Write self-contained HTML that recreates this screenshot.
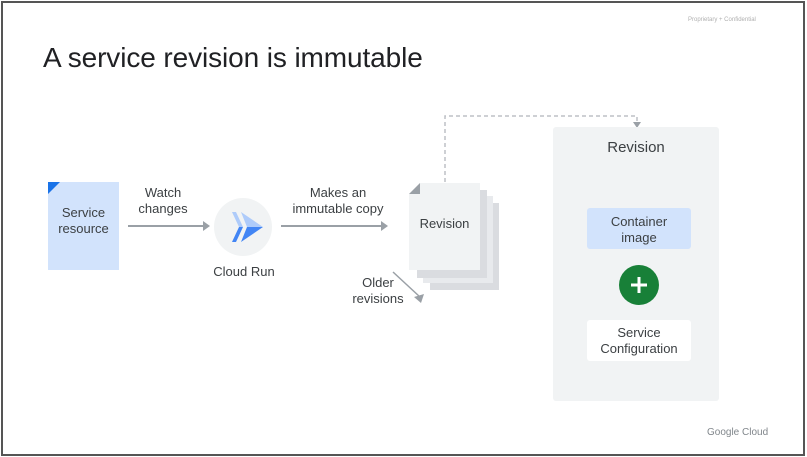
<!DOCTYPE html>
<html><head><style>
html,body{margin:0;padding:0;background:#fff;}
body{width:807px;height:457px;position:relative;overflow:hidden;font-family:"Liberation Sans",Arial,sans-serif;color:#3c4043;}
.a{position:absolute;}
.t{font-size:13px;text-align:center;line-height:16px;color:#3c4043;white-space:nowrap;}
</style></head><body>
<div class="a" style="left:1px;top:1px;width:800px;height:451px;border:2px solid #555;"></div>
<div class="a" style="left:688px;top:17px;font-size:6px;color:#b0b0b0;">Proprietary + Confidential</div>
<div class="a" style="left:43px;top:42px;font-size:28px;color:#202124;letter-spacing:-0.1px;">A service revision is immutable</div>

<div class="a" style="left:48px;top:182px;width:71px;height:88px;background:#d2e3fc;"></div>
<svg class="a" style="left:48px;top:182px" width="12" height="12"><polygon points="0,12 12,0 0,0" fill="#1a73e8"/></svg>
<div class="a t" style="left:48px;top:205px;width:71px;">Service<br>resource</div>

<div class="a t" style="left:128px;top:185px;width:70px;">Watch<br>changes</div>
<svg class="a" style="left:0;top:0" width="807" height="457">
<line x1="128" y1="226" x2="203" y2="226" stroke="#9aa0a6" stroke-width="2"/>
<polygon points="203,221 210,226 203,231" fill="#9aa0a6"/>
<line x1="281" y1="226" x2="381" y2="226" stroke="#9aa0a6" stroke-width="2"/>
<polygon points="381,221 388,226 381,231" fill="#9aa0a6"/>
<line x1="393" y1="272" x2="420" y2="297" stroke="#9aa0a6" stroke-width="1.5"/>
<polygon points="421,303 414,297 424,294" fill="#9aa0a6"/>
<polyline points="445,182 445,116 637,116 637,124" fill="none" stroke="#bdc1c6" stroke-width="1.5" stroke-dasharray="4,3"/>
<polygon points="633,122 637,128 641,122" fill="#9aa0a6"/>
<circle cx="243" cy="227" r="29" fill="#f1f3f4"/>
<polygon points="232,212 236,212 243,227 239,227" fill="#aecbfa"/>
<polygon points="239,227 243,227 236,242 232,242" fill="#4285f4"/>
<polygon points="241,212 263,227 247,227" fill="#aecbfa"/>
<polygon points="247,227 263,227 241,242" fill="#4285f4"/>
<rect x="430" y="203" width="69" height="87" fill="#dadce0"/>
<rect x="423" y="196" width="70" height="87" fill="#e8eaed"/>
<rect x="417" y="190" width="70" height="88" fill="#dadce0"/>
<rect x="409" y="183" width="71" height="87" fill="#f1f3f4"/>
<polygon points="409,183 420,183 409,194" fill="#fff"/>
<polygon points="409,194 420,183 420,194" fill="#9aa0a6"/>
<rect x="553" y="127" width="166" height="274" rx="3" fill="#f1f3f4"/>
<rect x="587" y="208" width="104" height="41" rx="3" fill="#d2e3fc"/>
<rect x="587" y="320" width="104" height="41" rx="3" fill="#fff"/>
<circle cx="639" cy="285" r="20" fill="#188038"/>
<rect x="631" y="283.5" width="16" height="3" fill="#fff"/>
<rect x="637.5" y="277" width="3" height="16" fill="#fff"/>
</svg>
<div class="a t" style="left:204px;top:264px;width:80px;">Cloud Run</div>
<div class="a t" style="left:283px;top:185px;width:110px;">Makes an<br>immutable copy</div>
<div class="a t" style="left:409px;top:216px;width:71px;">Revision</div>
<div class="a t" style="left:343px;top:275px;width:70px;">Older<br>revisions</div>
<div class="a" style="left:553px;top:139px;width:166px;text-align:center;font-size:15px;">Revision</div>
<div class="a t" style="left:587px;top:214px;width:104px;">Container<br>image</div>
<div class="a t" style="left:587px;top:325px;width:104px;">Service<br>Configuration</div>
<div class="a" style="left:707px;top:427px;font-size:10px;color:#80868b;">Google Cloud</div>
</body></html>
